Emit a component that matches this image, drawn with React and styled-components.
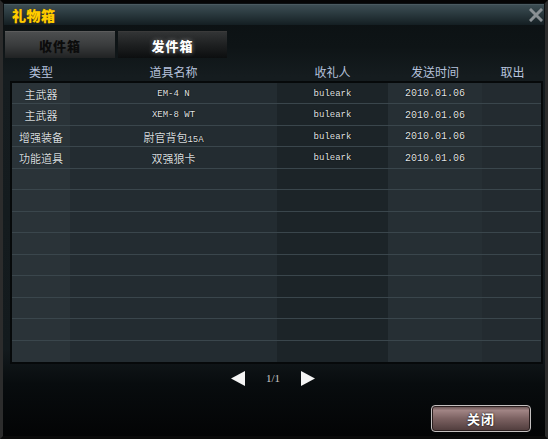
import React from "react";
import styled, { createGlobalStyle } from "styled-components";

const GlobalStyle = createGlobalStyle`
  html, body {
    margin: 0;
    padding: 0;
    background: #000;
  }
  * {
    box-sizing: border-box;
  }
`;

const CJK = `"Noto Sans CJK SC", "Noto Sans", sans-serif`;
const MONO = `"Liberation Mono", "Noto Sans CJK SC", monospace`;

const COLS = "58px 207px 111px 94px 1fr";

// gift rows, the rest of the table stays empty
const gifts = [
  { type: "主武器", name: "EM-4 N", to: "buleark", date: "2010.01.06" },
  { type: "主武器", name: "XEM-8 WT", to: "buleark", date: "2010.01.06" },
  { type: "增强装备", name: "尉官背包", suffix: "15A", to: "buleark", date: "2010.01.06" },
  { type: "功能道具", name: "双强狼卡", to: "buleark", date: "2010.01.06" },
];

const TOTAL_ROWS = 13;

const App = () => {
  const rows = [...gifts];
  while (rows.length < TOTAL_ROWS) rows.push(null);

  return (
    <>
      <GlobalStyle />
      <Window>
        <TitleBar>
          <Title>礼物箱</Title>
          <CloseX viewBox="0 0 14 14">
            <path d="M2 2 L12 12 M12 2 L2 12" stroke="#8a9094" strokeWidth="3" strokeLinecap="square" />
          </CloseX>
        </TitleBar>

        <Tabs>
          <Tab>收件箱</Tab>
          <Tab $active>发件箱</Tab>
        </Tabs>

        <HeaderRow>
          <span>类型</span>
          <span>道具名称</span>
          <span>收礼人</span>
          <span>发送时间</span>
          <span>取出</span>
        </HeaderRow>

        <Table>
          {rows.map((g, i) => (
            <Row key={i}>
              <Cell $tone="#2a3338">{g && g.type}</Cell>
              <Cell $tone="#232c31">
                {g &&
                  (g.suffix ? (
                    <span>
                      {g.name}
                      <Mono>{g.suffix}</Mono>
                    </span>
                  ) : /[a-zA-Z]/.test(g.name) ? (
                    <Mono>{g.name}</Mono>
                  ) : (
                    g.name
                  ))}
              </Cell>
              <Cell $tone="#1c2428">{g && <Mono>{g.to}</Mono>}</Cell>
              <Cell $tone="#262f34">{g && <Mono $wide>{g.date}</Mono>}</Cell>
              <Cell $tone="#232b30" />
            </Row>
          ))}
        </Table>

        <Pager>
          <Arrow viewBox="0 0 15 15">
            <path d="M14 0 L14 15 L0 7.5 Z" fill="#f4f4f4" />
          </Arrow>
          <PageText>1/1</PageText>
          <Arrow viewBox="0 0 15 15">
            <path d="M1 0 L1 15 L15 7.5 Z" fill="#f4f4f4" />
          </Arrow>
        </Pager>

        <Footer>
          <CloseButton>关闭</CloseButton>
        </Footer>
      </Window>
    </>
  );
};

export default App;

const Window = styled.div`
  width: 548px;
  height: 439px;
  display: flex;
  flex-direction: column;
  border: 3px solid #2c2c2c;
  border-top-color: #050505;
  border-bottom-color: #0a0a0a;
  background: linear-gradient(
    180deg,
    #0b1012 0%,
    #0e1416 10%,
    #151c1f 17%,
    #131a1d 80%,
    #080c0e 88%,
    #030405 100%
  );
  font-family: ${CJK};
`;

const TitleBar = styled.div`
  height: 21px;
  margin: 1px 1px 0;
  display: flex;
  align-items: center;
  justify-content: space-between;
  padding: 0 1px 0 8px;
  background: linear-gradient(180deg, #3c4d53 0%, #2a393e 45%, #141e22 100%);
  border-top: 1px solid #4a5a60;
`;

const Title = styled.span`
  color: #ffcc00;
  font-size: 14px;
  font-weight: 900;
  letter-spacing: 0.5px;
  text-shadow: 0 0 1px #7a5a00;
`;

const CloseX = styled.svg`
  width: 14px;
  height: 14px;
`;

const Tabs = styled.div`
  display: flex;
  gap: 3px;
  margin-top: 6px;
  padding-left: 2px;
`;

const Tab = styled.div`
  width: ${(p) => (p.$active ? "109px" : "110px")};
  height: 27px;
  display: flex;
  align-items: center;
  justify-content: center;
  font-size: 13px;
  font-weight: 900;
  letter-spacing: 1px;
  border-top: 1px solid ${(p) => (p.$active ? "#3a3a3a" : "#5c5c5c")};
  background: ${(p) =>
    p.$active
      ? "linear-gradient(180deg, #323435 0%, #1c1e1f 55%, #0c0e0f 100%)"
      : "linear-gradient(180deg, #4c4e4f 0%, #3a3c3d 50%, #202223 100%)"};
  color: ${(p) => (p.$active ? "#ffffff" : "#0c0c0c")};
  text-shadow: ${(p) => (p.$active ? "0 0 2px #000, 0 0 4px #999" : "none")};
`;

const HeaderRow = styled.div`
  display: grid;
  grid-template-columns: ${COLS};
  height: 23px;
  padding: 0 2px 1px 9px;
  align-items: end;

  span {
    text-align: center;
    color: #b6c2dc;
    font-size: 12px;
    line-height: 16px;
  }
`;

const Table = styled.div`
  margin: 0 0 0 7px;
  width: 533px;
  height: 283px;
  border: 2px solid #06090a;
  display: grid;
  grid-template-rows: repeat(${TOTAL_ROWS}, 1fr);
  background: #1e262a;
`;

const Row = styled.div`
  display: grid;
  grid-template-columns: ${COLS};
  border-bottom: 1px solid #3a464c;

  &:last-child {
    border-bottom: none;
  }
`;

const Cell = styled.div`
  background: ${(p) => p.$tone};
  display: flex;
  align-items: center;
  justify-content: center;
  padding-top: 1px;
  color: #d6dcdf;
  font-size: 11px;
  text-shadow: 0 0 1px #000;
`;

const Mono = styled.span`
  font-family: ${MONO};
  font-size: ${(p) => (p.$wide ? "10px" : "9px")};
  font-weight: 400;
  color: #e2e6e8;
  text-shadow: 0 0 1px #000, 0 0 1px #000;
`;

const Pager = styled.div`
  height: 28px;
  display: flex;
  align-items: center;
  justify-content: center;
  gap: 20px;
  padding-right: 2px;
`;

const Arrow = styled.svg`
  width: 15px;
  height: 15px;
`;

const PageText = styled.span`
  font-family: "Liberation Serif", serif;
  font-size: 11px;
  color: #c8c8c8;
`;

const Footer = styled.div`
  flex: 1;
  display: flex;
  align-items: flex-end;
  justify-content: flex-end;
  padding: 0 14px 4px 0;
`;

const CloseButton = styled.button`
  width: 100px;
  height: 27px;
  border: 1px solid #c4c0c0;
  border-radius: 4px;
  background: linear-gradient(180deg, #5e4a4a 0%, #a08484 18%, #7c6262 50%, #4e3b3b 100%);
  box-shadow: inset 0 0 0 1px #2a1e1e;
  color: #ffffff;
  font-family: ${CJK};
  font-size: 13px;
  font-weight: 700;
  letter-spacing: 1px;
  text-shadow: 0 0 2px #000;
  padding: 0;
`;
